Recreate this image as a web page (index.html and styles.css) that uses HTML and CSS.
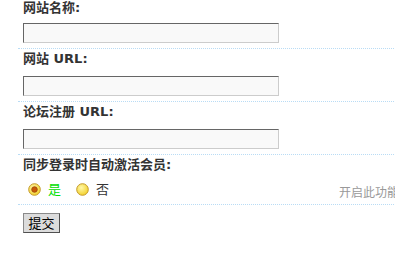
FILE: index.html
```html
<!DOCTYPE html>
<html lang="zh-CN">
<head>
<meta charset="utf-8">
<title>设置</title>
<link rel="stylesheet" href="styles.css">
</head>
<body>
<div class="wrap">
  <div class="table">
    <div class="label-row first">网站名称:</div>
    <div class="field-row">
      <div class="cell"><input class="txt" type="text"></div>
      <div class="tips"></div>
    </div>

    <div class="label-row">网站 URL:</div>
    <div class="field-row">
      <div class="cell"><input class="txt" type="text"></div>
      <div class="tips"></div>
    </div>

    <div class="label-row">论坛注册 URL:</div>
    <div class="field-row">
      <div class="cell"><input class="txt" type="text"></div>
      <div class="tips"></div>
    </div>

    <div class="label-row">同步登录时自动激活会员:</div>
    <div class="radio-row">
      <ul class="onoff">
        <li class="opt checked">
          <svg class="radio" width="13" height="13" viewBox="0 0 13 13">
            <defs>
              <radialGradient id="g1" cx="40%" cy="35%" r="70%">
                <stop offset="0" stop-color="#fff7a8"/>
                <stop offset="1" stop-color="#f2cf25"/>
              </radialGradient>
            </defs>
            <circle cx="6.5" cy="6.5" r="5.8" fill="url(#g1)" stroke="#c49a2a"/>
            <circle cx="6.5" cy="6.5" r="2.8" fill="#c85a08" stroke="#9a4404" stroke-width="0.8"/>
          </svg>
          <span class="yes">是</span>
        </li>
        <li class="opt">
          <svg class="radio" width="13" height="13" viewBox="0 0 13 13">
            <defs>
              <radialGradient id="g2" cx="40%" cy="35%" r="70%">
                <stop offset="0" stop-color="#fff7a8"/>
                <stop offset="1" stop-color="#f2cf25"/>
              </radialGradient>
            </defs>
            <circle cx="6.5" cy="6.5" r="5.8" fill="url(#g2)" stroke="#c49a2a"/>
          </svg>
          <span class="no">否</span>
        </li>
      </ul>
      <div class="tips">开启此功能后，用户登录时将自动激活</div>
    </div>

    <div class="submit-row">
      <button class="btn" type="button">提交</button>
    </div>
  </div>
</div>
</body>
</html>
```
FILE: styles.css
```css
html, body {
  margin: 0;
  padding: 0;
  background: #fff;
  overflow: hidden;
}

body {
  font-family: "DejaVu Sans", "Noto Sans CJK SC", sans-serif;
  font-size: 12px;
  color: #333;
}

.wrap {
  margin-left: 18px;
  margin-top: -4px;
  overflow: hidden;
}

.table {
  width: 700px;
}

.label-row {
  height: 20px;
  line-height: 20px;
  padding-left: 5px;
  font-size: 13px;
  font-weight: bold;
  color: #333;
  white-space: nowrap;
}

.label-row.first {
  line-height: 23px;
}

.field-row {
  display: grid;
  grid-template-columns: 316px 1fr;
  padding: 7px 0 5px 5px;
  border-bottom: 1px dotted #b9dcf5;
}

.cell {
  display: flex;
}

.txt {
  box-sizing: border-box;
  width: 256px;
  height: 20px;
  margin: 0;
  padding: 0 3px;
  border: 1px solid;
  border-color: #666 #ccc #ccc #666;
  background: #f9f9f9;
  font: 12px "DejaVu Sans", sans-serif;
  outline: none;
}

.radio-row {
  display: grid;
  grid-template-columns: 316px 1fr;
  align-items: center;
  height: 29px;
  padding-left: 5px;
  border-bottom: 1px dotted #b9dcf5;
}

.onoff {
  display: flex;
  align-items: center;
  margin: 0;
  padding: 0 0 0 5px;
  list-style: none;
}

.opt {
  display: flex;
  align-items: center;
  gap: 7px;
  margin-right: 15px;
  line-height: 14px;
  font-size: 13px;
}

.radio {
  display: block;
  flex: none;
}

.yes {
  color: #00dd00;
}

.no {
  color: #333;
}

.tips {
  color: #999;
  white-space: nowrap;
  padding-top: 3px;
}

.submit-row {
  padding: 8px 0 0 5px;
}

.btn {
  box-sizing: border-box;
  width: 37px;
  height: 20px;
  margin: 0;
  padding: 0;
  border: 1px solid;
  border-color: #8a8a8a #505050 #505050 #8a8a8a;
  background: #dcdcdc;
  color: #000;
  font: 13px "Noto Sans CJK SC", sans-serif;
  line-height: 18px;
}
```
